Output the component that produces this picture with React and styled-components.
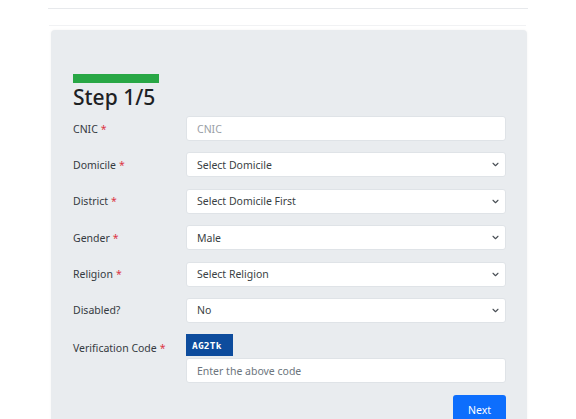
import styled, { createGlobalStyle } from 'styled-components';

const GlobalStyle = createGlobalStyle`
  html, body {
    margin: 0;
    padding: 0;
    background: #fff;
    font-family: 'Noto Sans', 'Open Sans', Arial, sans-serif;
    color: #212529;
  }
  * { box-sizing: border-box; }
`;

const Page = styled.div`
  width: 576px;
  height: 419px;
  overflow: hidden;
  padding: 0 48px 0 48px;
`;

const TopBar = styled.div`
  height: 9px;
  border-bottom: 1px solid #e7e9ec;
  margin-bottom: 16px;
`;

const Shade = styled.div`
  height: 1px;
  margin: 0 2px 4px 1px;
  background: #f1f2f4;
`;

const Card = styled.div`
  margin: 0 1px 0 3px;
  background: #e9ecef;
  border-radius: 4px 4px 0 0;
  padding: 44px 21px 30px 22px;
  box-shadow: 0 0 3px rgba(0, 0, 0, 0.05);
`;

const Progress = styled.div`
  width: 86px;
  height: 9px;
  background: #28a745;
`;

const Title = styled.h2`
  margin: 2px 0 6px;
  font-size: 21px;
  font-weight: 500;
  line-height: 25px;
  color: #1d2124;
`;

const Row = styled.div`
  display: grid;
  grid-template-columns: 113px 1fr;
  align-items: ${p => (p.top ? 'start' : 'center')};
  margin-bottom: 11.4px;
`;

const Label = styled.label`
  font-size: 10.5px;
  color: #353a3f;
  padding-top: ${p => (p.top ? '7px' : '0')};
`;

const Req = styled.span`
  color: #dc3545;
  margin-left: 3px;
`;

const Field = styled.div`
  position: relative;
  display: flex;
  flex-direction: column;
`;

const Input = styled.input`
  width: 100%;
  height: 25px;
  border: 1px solid #dfe3e7;
  border-radius: 3px;
  background: #fff;
  padding: 0 10px;
  font: inherit;
  font-size: 10.5px;
  color: #495057;
  outline: none;
  &::placeholder { color: ${p => (p.light ? '#9aa0a6' : '#6c757d')}; }
`;

const Select = styled.select`
  width: 100%;
  height: 25px;
  border: 1px solid #dfe3e7;
  border-radius: 3px;
  background: #fff;
  padding: 0 22px 0 10px;
  font: inherit;
  font-size: 10.5px;
  color: #3a3f44;
  appearance: none;
  outline: none;
`;

const Chevron = styled.svg`
  position: absolute;
  right: 7px;
  top: 10px;
  pointer-events: none;
`;

const Captcha = styled.div`
  width: 47px;
  height: 22px;
  background: #0d4c9d;
  color: #fff;
  font-family: 'DejaVu Sans Mono', monospace;
  font-size: 9.5px;
  font-weight: 700;
  letter-spacing: 0.2px;
  display: flex;
  align-items: center;
  justify-content: flex-start;
  padding-left: 6px;
  margin-bottom: 2px;
`;

const Actions = styled.div`
  display: flex;
  justify-content: flex-end;
`;

const Button = styled.button`
  width: 53px;
  height: 30px;
  border: none;
  border-radius: 3px;
  background: #0d6efd;
  color: #fff;
  font: inherit;
  font-size: 10.5px;
`;

function SelectField({ value }) {
  return (
    <Field>
      <Select defaultValue={value}>
        <option>{value}</option>
      </Select>
      <Chevron width="7" height="5" viewBox="0 0 14 10">
        <path d="M2 2.5l5 5 5-5" fill="none" stroke="#4a5056" strokeWidth="2.2" strokeLinecap="round" strokeLinejoin="round" />
      </Chevron>
    </Field>
  );
}

const selects = [
  { label: 'Domicile', value: 'Select Domicile', req: true },
  { label: 'District', value: 'Select Domicile First', req: true },
  { label: 'Gender', value: 'Male', req: true },
  { label: 'Religion', value: 'Select Religion', req: true },
  { label: 'Disabled?', value: 'No', req: false },
];

export default function App() {
  return (
    <>
      <GlobalStyle />
      <Page>
        <TopBar />
        <Shade />
        <Card>
          <Progress />
          <Title>Step 1/5</Title>
          <Row>
            <Label>CNIC<Req>*</Req></Label>
            <Field>
              <Input light placeholder="CNIC" />
            </Field>
          </Row>
          {selects.map(s => (
            <Row key={s.label}>
              <Label>{s.label}{s.req && <Req>*</Req>}</Label>
              <SelectField value={s.value} />
            </Row>
          ))}
          <Row top>
            <Label top>Verification Code<Req>*</Req></Label>
            <Field>
              <Captcha>AG2Tk</Captcha>
              <Input placeholder="Enter the above code" />
            </Field>
          </Row>
          <Actions>
            <Button>Next</Button>
          </Actions>
        </Card>
      </Page>
    </>
  );
}
